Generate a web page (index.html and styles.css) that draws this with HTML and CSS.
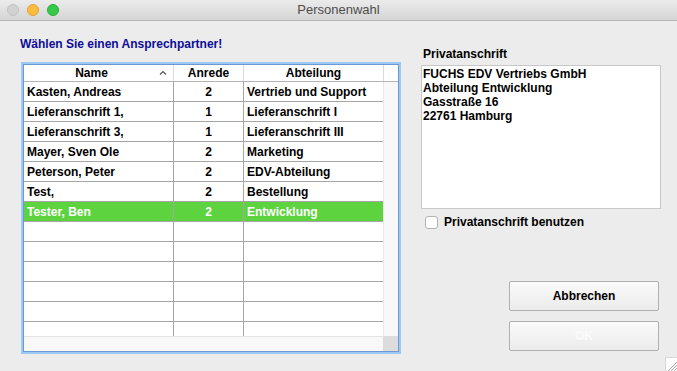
FILE: index.html
```html
<!DOCTYPE html>
<html lang="de">
<head>
  <meta charset="UTF-8">
  <title>Personenwahl</title>
  <link rel="stylesheet" href="styles.css">
</head>
<body>

  <div class="titlebar">
    <div class="lights">
      <span class="light close"></span>
      <span class="light min"></span>
      <span class="light max"></span>
    </div>
    <div class="title">Personenwahl</div>
    <div></div>
  </div>

  <div class="main">
    <div class="left">
      <div class="heading">Wählen Sie einen Ansprechpartner!</div>

      <div class="frame">
        <div class="thead">
          <div class="th th-name">
            <span>Name</span>
            <svg class="caret" width="8" height="5" viewBox="0 0 8 5"><path d="M1 4.5 L4 1.5 L7 4.5" fill="none" stroke="#555" stroke-width="1.2"/></svg>
          </div>
          <div class="th">Anrede</div>
          <div class="th">Abteilung</div>
          <div class="th th-end"></div>
        </div>

        <div class="tbody">
          <div class="rows">
            <div class="row"><div class="td">Kasten, Andreas</div><div class="td num">2</div><div class="td">Vertrieb und Support</div></div>
            <div class="row"><div class="td">Lieferanschrift 1,</div><div class="td num">1</div><div class="td">Lieferanschrift I</div></div>
            <div class="row"><div class="td">Lieferanschrift 3,</div><div class="td num">1</div><div class="td">Lieferanschrift III</div></div>
            <div class="row"><div class="td">Mayer, Sven Ole</div><div class="td num">2</div><div class="td">Marketing</div></div>
            <div class="row"><div class="td">Peterson, Peter</div><div class="td num">2</div><div class="td">EDV-Abteilung</div></div>
            <div class="row"><div class="td">Test,</div><div class="td num">2</div><div class="td">Bestellung</div></div>
            <div class="row selected"><div class="td">Tester, Ben</div><div class="td num">2</div><div class="td">Entwicklung</div></div>
            <div class="row"><div class="td"></div><div class="td num"></div><div class="td"></div></div>
            <div class="row"><div class="td"></div><div class="td num"></div><div class="td"></div></div>
            <div class="row"><div class="td"></div><div class="td num"></div><div class="td"></div></div>
            <div class="row"><div class="td"></div><div class="td num"></div><div class="td"></div></div>
            <div class="row"><div class="td"></div><div class="td num"></div><div class="td"></div></div>
            <div class="row"><div class="td"></div><div class="td num"></div><div class="td"></div></div>
          </div>
          <div class="vscroll"></div>
        </div>

        <div class="hscroll">
          <div class="hbar"></div>
          <div class="corner"></div>
        </div>
      </div>
    </div>

    <div class="right">
      <div class="label">Privatanschrift</div>
      <div class="address">FUCHS EDV Vertriebs GmbH<br>Abteilung Entwicklung<br>Gasstraße 16<br>22761 Hamburg</div>
      <label class="check"><span class="box"></span>Privatanschrift benutzen</label>

      <div class="buttons">
        <div class="btn">Abbrechen</div>
        <div class="btn disabled">OK</div>
      </div>
    </div>
  </div>

  <svg class="grip" width="12" height="14" viewBox="0 0 12 14">
    <rect x="0.5" y="0.5" width="12" height="14" fill="#fdfdfd" stroke="#d6d6d6"/>
    <path d="M3 14 L12 5 M6 14 L12 8 M9 14 L12 11" stroke="#a8a8a8" stroke-width="1"/>
  </svg>

</body>
</html>
```

FILE: styles.css
```css
body {
  margin: 0;
  width: 677px;
  height: 371px;
  overflow: hidden;
  background-color: #ececec;
  font-family: "Liberation Sans", Arial, sans-serif;
  font-size: 12px;
  font-weight: bold;
  color: #000;
  position: relative;
}

.titlebar {
  height: 20px;
  border-bottom: 1px solid #b3b3b3;
  background: linear-gradient(#ebebeb, #d5d5d5);
  display: grid;
  grid-template-columns: 1fr auto 1fr;
  align-items: center;
}

.lights {
  display: flex;
  gap: 8px;
  padding-left: 7px;
}

.light {
  width: 12px;
  height: 12px;
  border-radius: 50%;
  box-sizing: border-box;
}

.close { background: #d2d2d2; border: 1px solid #c2c2c2; }
.min   { background: #fdbc40; border: 1px solid #e0a233; }
.max   { background: #35c94a; border: 1px solid #29ab36; }

.title {
  font-size: 13px;
  font-weight: normal;
  color: #4d4d4d;
  line-height: 20px;
}

.main {
  height: 350px;
  box-sizing: border-box;
  padding: 16px 16px 20px 20px;
  display: flex;
}

.left {
  width: 379px;
}

.heading {
  line-height: 14px;
  color: #0e0e98;
}

.frame {
  margin: 13px 0 0 3px;
  width: 376px;
  height: 288px;
  box-sizing: border-box;
  border: 1px solid #6c99d6;
  box-shadow: 0 0 0 2px #9ec8f4;
  background: #fff;
  display: flex;
  flex-direction: column;
}

.thead {
  display: grid;
  grid-template-columns: 150px 70px 140px 1fr;
  height: 17px;
  box-sizing: border-box;
  border-bottom: 1px solid #b4b4b4;
}

.th {
  padding-top: 1px;
  line-height: 15px;
  text-align: center;
  border-right: 1px solid #dadada;
}

.th-name {
  display: flex;
  align-items: center;
}

.th-name span {
  flex: 1;
  text-align: center;
}

.caret {
  margin-right: 6px;
  margin-top: -3px;
}

.th-end {
  border-right: none;
}

.tbody {
  flex: 1;
  display: flex;
  overflow: hidden;
}

.rows {
  width: 359px;
}

.row {
  display: grid;
  grid-template-columns: 150px 70px 139px;
  height: 20px;
  box-sizing: border-box;
  border-bottom: 1px solid #a6a6a6;
}

.td {
  padding: 1px 0 0 3px;
  line-height: 18px;
  border-right: 1px solid #a6a6a6;
  white-space: nowrap;
  overflow: hidden;
}

.td:last-child {
  border-right: none;
}

.num {
  text-align: center;
  padding-left: 0;
}

.selected {
  background: #5dd43f;
  color: #fff;
}

.vscroll {
  flex: 1;
  background: #f8f8f8;
  border-left: 1px solid #e8e8e8;
}

.hscroll {
  height: 15px;
  display: flex;
}

.hbar {
  flex: 1;
  background: #f8f8f8;
  border-top: 1px solid #e4e4e4;
}

.corner {
  width: 15px;
  background: #dcdcdc;
}

.right {
  margin-left: 22px;
  width: 240px;
  display: flex;
  flex-direction: column;
}

.label {
  margin-top: 10px;
  padding-left: 2px;
  line-height: 14px;
}

.address {
  margin-top: 4px;
  height: 144px;
  box-sizing: border-box;
  border: 1px solid #c8c8c8;
  background: #fff;
  padding: 1px 0 0 1px;
  line-height: 14px;
}

.check {
  margin-top: 6px;
  display: flex;
  align-items: center;
  line-height: 14px;
}

.box {
  width: 13px;
  height: 13px;
  box-sizing: border-box;
  margin: 0 6px 0 4px;
  border: 1px solid #b2b2b2;
  border-radius: 3px;
  background: #fff;
}

.buttons {
  margin-top: auto;
  align-self: flex-end;
  margin-right: 2px;
  display: flex;
  flex-direction: column;
  gap: 10px;
}

.btn {
  width: 150px;
  height: 30px;
  box-sizing: border-box;
  border: 1px solid #b1b1b1;
  border-radius: 2px;
  background: linear-gradient(#fafafa, #ececec);
  text-align: center;
  line-height: 28px;
}

.btn.disabled {
  color: #fbfbfb;
}

.grip {
  position: absolute;
  right: 0;
  bottom: 0;
}
```
